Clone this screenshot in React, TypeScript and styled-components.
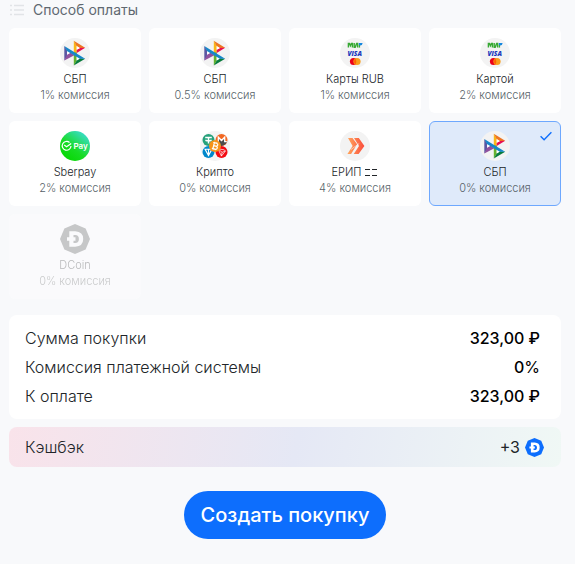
import React, { useState } from "react";
import styled, { createGlobalStyle, css } from "styled-components";

const GlobalStyle = createGlobalStyle`
  * { box-sizing: border-box; }
  body {
    margin: 0;
    background: #f8f9fb;
    color: #212529;
    font-family: Inter, "Noto Sans", sans-serif;
  }
`;

const Page = styled.main`
  padding: 0 14px 24px 9px;
`;

const Header = styled.h2`
  display: flex;
  align-items: center;
  gap: 8px;
  height: 20px;
  margin: 0 0 8px;
  font-size: 14px;
  line-height: 20px;
  font-weight: 400;
  color: #5f6870;
`;

const Methods = styled.div`
  display: grid;
  grid-template-columns: repeat(4, minmax(0, 1fr));
  gap: 8px;
`;

const HiddenRadio = styled.input`
  position: absolute;
  inset: 0;
  margin: 0;
  opacity: 0;
  cursor: inherit;
`;

const Card = styled.label<{ $selected: boolean; $disabled?: boolean }>`
  position: relative;
  display: flex;
  flex-direction: column;
  align-items: center;
  padding: 9px 8px;
  border: 1px solid transparent;
  border-radius: 6px;
  background: #fff;
  font-size: 11px;
  font-weight: 300;
  line-height: 16px;
  cursor: pointer;
  ${(p) => p.$selected && css`
    background: #dfeafa;
    border-color: #6ea8fe;
  `}
  ${(p) => p.$disabled && css`
    opacity: 0.3;
    filter: grayscale(1);
    cursor: default;
  `}
`;

const MethodIcon = styled.svg`
  display: block;
  width: 30px;
  height: 30px;
  margin-bottom: 3px;
`;

const MethodName = styled.span`
  color: #212529;
`;

const Fee = styled.span`
  color: #565f67;
`;

const Check = styled.svg`
  position: absolute;
  top: 8px;
  right: 8px;
  width: 12px;
  height: 12px;
`;

const Summary = styled.dl`
  display: flex;
  flex-direction: column;
  gap: 5px;
  margin: 16px 0 8px;
  padding: 11px 21px 11px 16px;
  border-radius: 8px;
  background: #fff;
`;

const SummaryRow = styled.div`
  display: flex;
  justify-content: space-between;
  font-size: 16px;
  line-height: 24px;
`;

const Term = styled.dt`
  font-weight: 300;
`;

const Value = styled.dd`
  margin: 0;
  font-weight: 500;
  color: #000;
`;

const Thin = styled.span`
  font-weight: 400;
`;

const Cashback = styled.div`
  display: flex;
  align-items: center;
  justify-content: space-between;
  height: 40px;
  padding: 0 17px 0 16px;
  border-radius: 8px;
  background: linear-gradient(100deg, #f9e3ea 0%, #e5e8f5 52%, #f0f8f5 100%);
  font-size: 16px;
  font-weight: 300;
`;

const Bonus = styled.span`
  display: flex;
  align-items: center;
  gap: 5px;
  font-weight: 400;
`;

const CoinIcon = styled.svg`
  width: 19px;
  height: 19px;
`;

const Actions = styled.div`
  display: flex;
  justify-content: center;
  margin-top: 24px;
`;

const Submit = styled.button`
  height: 48px;
  padding: 0 17px;
  border: 0;
  border-radius: 24px;
  background: #0d6efd;
  color: #fff;
  font-family: inherit;
  font-size: 20px;
  font-weight: 500;
  line-height: 28px;
  cursor: pointer;
`;

const SbpArt = () => (
  <>
    <circle cx="15" cy="15" r="15" fill="#f3f3f3" />
    <path d="M4.3 8 7.1 12.2v6.4L4.3 22.6Z" fill="#5b57a2" />
    <path d="m4.3 22.6 2.8-6 3.3-2 4 2.6Z" fill="#90519d" />
    <path d="M7.1 13v3.8l3-1.9Z" fill="#fff" />
    <path d="m13.8 2.8 2.9 5v9.4l-2.9-1.8Z" fill="#fab718" />
    <path d="m13.8 2.8 11.4 7-5 .6-3.5-2.2Z" fill="#ee7623" />
    <path d="m25.2 9.8-8.5 5.3v-3.4l3.5-1.8Z" fill="#e60d52" />
    <path d="M16.7 8v3.7l3.2-1.8Z" fill="#fff" />
    <path d="M13.8 14.5h2.9v8.3l-2.9 4.8Z" fill="#63b32e" />
    <path d="m13.8 27.6 2.9-5.1 3.5-2.2 5 .5Z" fill="#087b3c" />
    <path d="M16.7 18.8v3.7l3-1.9Z" fill="#fff" />
    <path d="m4.3 8 20.9 12.8-5.4-.1L6.9 12.9Z" fill="#1687c9" />
  </>
);

const CardsArt = () => (
  <>
    <circle cx="15" cy="15" r="15" fill="#f3f3f3" />
    <path d="M8.4 9.6V5.4h1l1 2.4 1-2.4h1v4.2M14.2 5v4.2h1l1.4-3.8h1v4.2" fill="none" stroke="#38a934" strokeWidth="1.4" />
    <path d="M19.4 6.5v3.1" stroke="#38a934" strokeWidth="1.4" />
    <path d="M18.8 5h3.8q-.1 2.6-2.5 2.6-1 0-1.3-1Z" fill="#1687df" />
    <text x="7.4" y="17.6" fontSize="6.6" fontWeight="800" fontStyle="italic" fontFamily="Open Sans" fill="#1938bc">VISA</text>
    <circle cx="13.5" cy="23.5" r="3.6" fill="#eb001b" />
    <circle cx="17" cy="23.5" r="3.6" fill="#f79e1b" />
    <path d="M15.2 20.4q2.2 3.1 0 6.2-2.2-3.1 0-6.2Z" fill="#ff5f00" />
  </>
);

const SberArt = () => (
  <>
    <defs>
      <linearGradient id="sber" x1=".2" y1=".9" x2=".8" y2=".1">
        <stop stopColor="#08d806" />
        <stop offset=".4" stopColor="#18dc24" />
        <stop offset="1" stopColor="#38dcc0" />
      </linearGradient>
    </defs>
    <circle cx="15" cy="15" r="15" fill="url(#sber)" />
    <path d="M9.5 11.5A4.4 4.4 0 1 0 11 15M4.2 14l2.4 1.8 4.6-3.3" fill="none" stroke="#fff" strokeWidth="1.2" />
    <text x="13.5" y="18" fill="#fff" fontSize="8" fontWeight="600" fontFamily="Inter">Pay</text>
  </>
);

const CryptoArt = () => (
  <>
    <circle cx="15" cy="15" r="15" fill="#f4f4f4" />
    <circle cx="8.5" cy="9" r="6" fill="#26a17b" />
    <path d="M5.2 6.4h6.6M8.5 6.4v6M5.4 9.2q3.1 1.3 6.2 0" stroke="#fff" strokeWidth="1.5" fill="none" />
    <circle cx="21.5" cy="9" r="6" fill="#f26822" />
    <path d="M16 10h2V7l3.5 3.3L25 7v3h2l-.8 2.5q-4.7 4.8-9.4 0Z" fill="#4c4c4c" />
    <path d="M16.2 10.6h2.1V6.2l3.2 3.3 3.2-3.3v4.4h2.1" fill="none" stroke="#fff" strokeWidth="1.3" />
    <circle cx="8.5" cy="21" r="6" fill="#0088cc" />
    <path d="M5.1 18.3h6.8l-3.4 6.2ZM8.5 18.3v6" fill="none" stroke="#fff" strokeWidth="1.1" />
    <circle cx="21.5" cy="21" r="6" fill="#f40b12" />
    <path d="m18 17.8 6.4 1.1 1 1.2-4 5Zm0 0 4.1 3.5 3.2-1.2m-3.2 1.2-.7 3.8" fill="none" stroke="#fff" strokeWidth=".7" />
    <circle cx="15" cy="15" r="6" fill="#f7931a" />
    <g transform="rotate(13 15 15)" fill="none" stroke="#fff" strokeWidth="1.2">
      <path d="M12.5 12h3.2c2.5 0 2.1 3 0 3h-2m2 0c2.7 0 2.5 3.1 0 3.1h-3.2M13.6 12v6M14 11v1m2-1v1m-2 6v1m2-1v1" />
    </g>
  </>
);

const EripArt = () => (
  <>
    <defs>
      <linearGradient id="erip" gradientUnits="userSpaceOnUse" x1="8" y1="15" x2="24" y2="15">
        <stop stopColor="#ffa35c" />
        <stop offset="1" stopColor="#fb4e3c" />
      </linearGradient>
    </defs>
    <circle cx="15" cy="15" r="15" fill="#f3f3f3" />
    <path d="M8 7h4.5l4.6 6.3-6 9.7H7.4l5.2-8.1ZM14 7h4.8l5.6 8-5.8 8h-4.9l5.3-8.1Z" fill="url(#erip)" />
    <path d="m11 18.5 8.2-6" stroke="#f3f3f3" strokeWidth=".6" />
  </>
);

const CoinArt = ({ fill }: { fill: string }) => (
  <>
    <path d="m15 0 10.6 4.4L30 15l-4.4 10.6L15 30 4.4 25.6 0 15 4.4 4.4Z" fill={fill} />
    <path fillRule="evenodd" d="M9.3 7.3h6q7.9.4 7.9 7.7t-7.9 7.7h-6v-6H7v-3.4h2.3Zm4.2 3.6v2.4h2v3.4h-2v2.4h1.7q3.7 0 3.7-4.1t-3.7-4.1Z" fill="#fff" />
  </>
);

const FlagGlyphs = styled.svg`
  width: 14px;
  height: 8px;
  margin-left: 3px;
`;

type Method = {
  id: string;
  name: string;
  fee: string;
  art: React.ReactNode;
  flag?: boolean;
  disabled?: boolean;
};

const methods: Method[] = [
  { id: "sbp1", name: "СБП", fee: "1%", art: <SbpArt /> },
  { id: "sbp05", name: "СБП", fee: "0.5%", art: <SbpArt /> },
  { id: "rub", name: "Карты RUB", fee: "1%", art: <CardsArt /> },
  { id: "card", name: "Картой", fee: "2%", art: <CardsArt /> },
  { id: "sber", name: "Sberpay", fee: "2%", art: <SberArt /> },
  { id: "crypto", name: "Крипто", fee: "0%", art: <CryptoArt /> },
  { id: "erip", name: "ЕРИП", fee: "4%", art: <EripArt />, flag: true },
  { id: "sbp0", name: "СБП", fee: "0%", art: <SbpArt /> },
  { id: "dcoin", name: "DCoin", fee: "0%", art: <CoinArt fill="#555" />, disabled: true },
];

export default function App() {
  const [selected, setSelected] = useState("sbp0");
  return (
    <>
      <GlobalStyle />
      <Page>
        <Header>
          <svg width="16" height="12" viewBox="0 0 16 12" stroke="#e1e4e7" strokeWidth="1.5" aria-hidden="true">
            <path d="M1 1.5h2M5 1.5h10M1 6h2M5 6h10M1 10.5h2M5 10.5h10" />
          </svg>
          Способ оплаты
        </Header>
        <Methods role="radiogroup" aria-label="Способ оплаты">
          {methods.map((m) => (
            <Card key={m.id} $selected={m.id === selected} $disabled={m.disabled}>
              <HiddenRadio
                type="radio"
                name="method"
                checked={m.id === selected}
                disabled={m.disabled}
                onChange={() => setSelected(m.id)}
              />
              <MethodIcon viewBox="0 0 30 30" aria-hidden="true">{m.art}</MethodIcon>
              <MethodName>
                {m.name}
                {m.flag && (
                  <FlagGlyphs viewBox="0 0 14 8" aria-hidden="true" fill="none" stroke="#212529">
                    <path d="M1 1.5h5M1 7.5h5M8 1.5h5M8 7.5h5" />
                  </FlagGlyphs>
                )}
              </MethodName>
              <Fee>{m.fee} комиссия</Fee>
              {m.id === selected && (
                <Check viewBox="0 0 12 12" aria-hidden="true">
                  <path d="m.6 6.2 3.5 3.5 7.3-7.4" fill="none" stroke="#0d6efd" strokeWidth="1.4" />
                </Check>
              )}
            </Card>
          ))}
        </Methods>
        <Summary>
          <SummaryRow>
            <Term>Сумма покупки</Term>
            <Value>323,00 ₽</Value>
          </SummaryRow>
          <SummaryRow>
            <Term>Комиссия платежной системы</Term>
            <Value>0<Thin>%</Thin></Value>
          </SummaryRow>
          <SummaryRow>
            <Term>К оплате</Term>
            <Value>323,00 ₽</Value>
          </SummaryRow>
        </Summary>
        <Cashback>
          <span>Кэшбэк</span>
          <Bonus>
            +3
            <CoinIcon viewBox="0 0 30 30" aria-hidden="true"><CoinArt fill="#0d6efd" /></CoinIcon>
          </Bonus>
        </Cashback>
        <Actions>
          <Submit type="button">Создать покупку</Submit>
        </Actions>
      </Page>
    </>
  );
}
